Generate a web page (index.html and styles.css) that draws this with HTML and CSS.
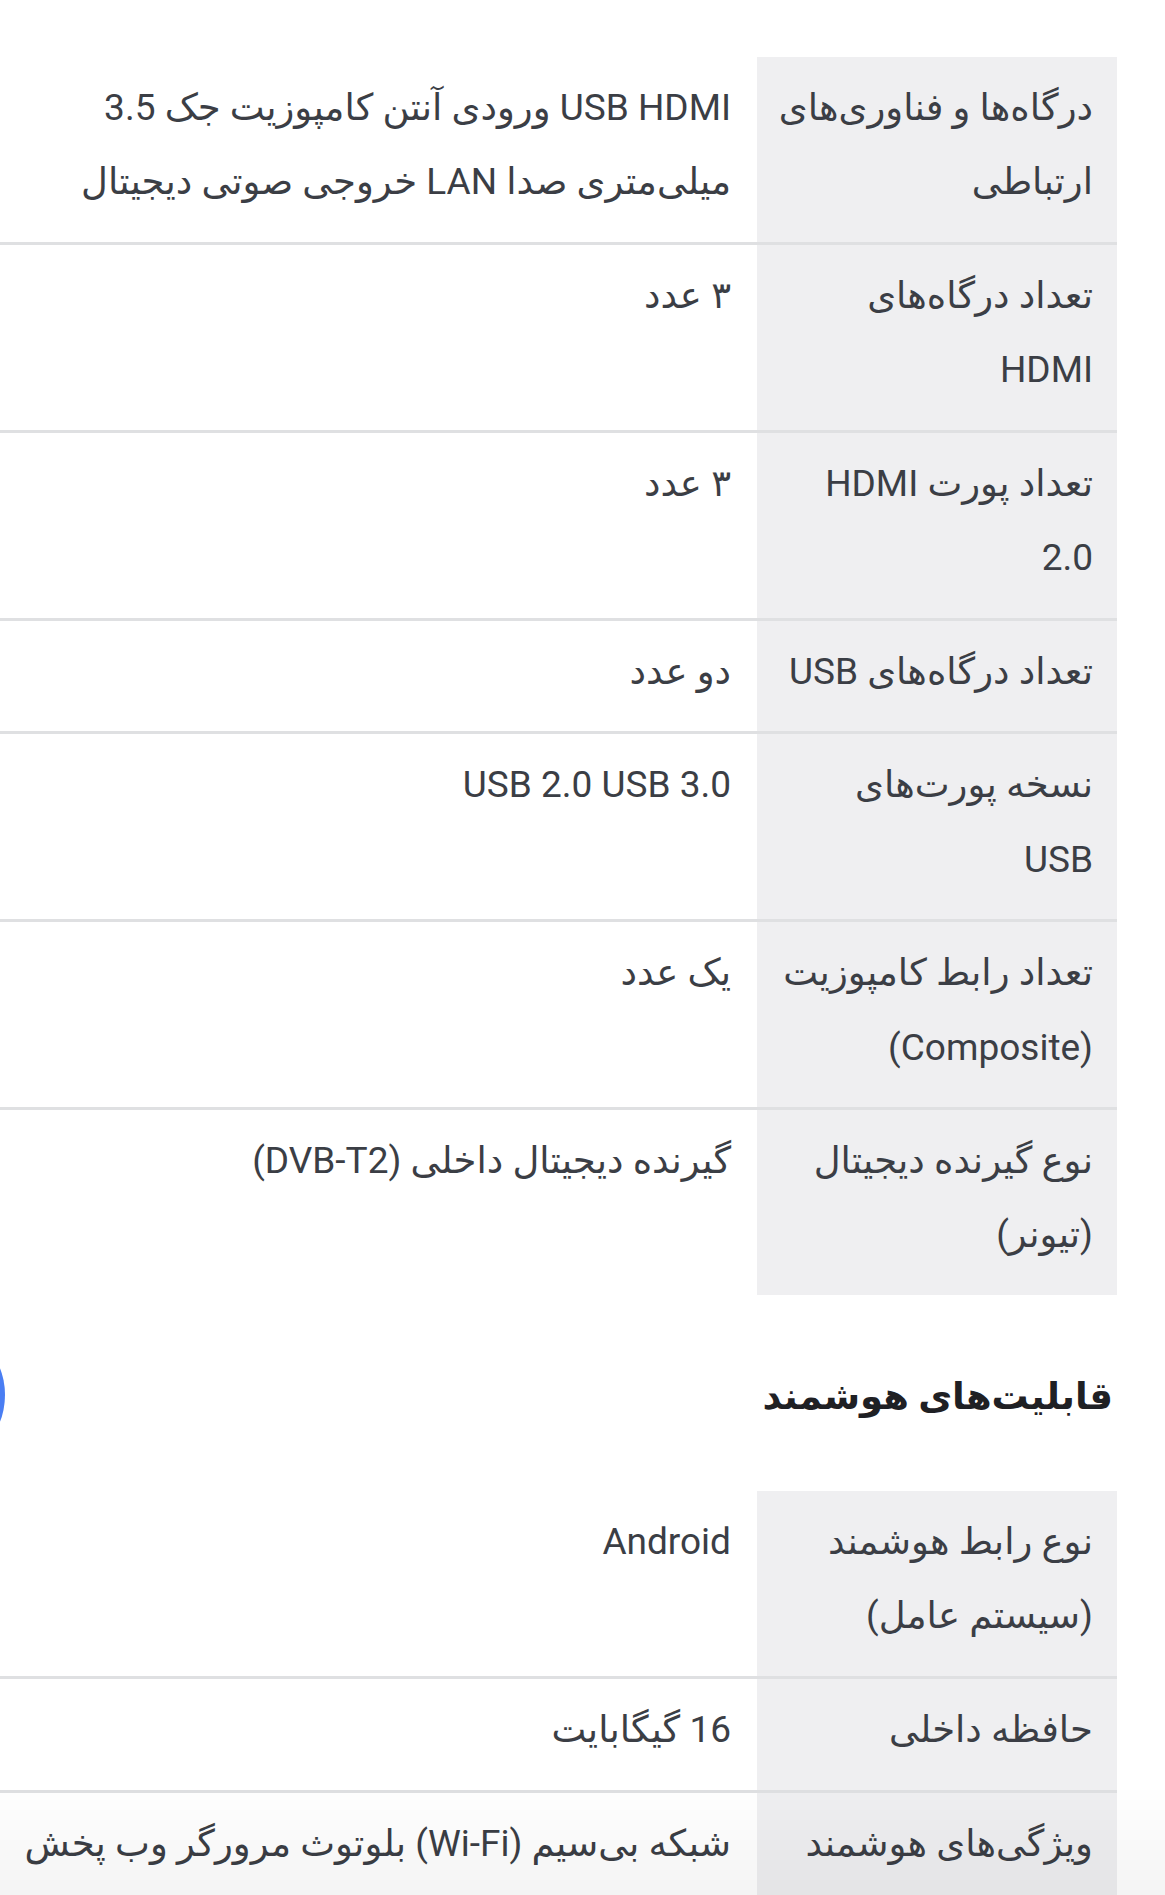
FILE: index.html
```html
<!DOCTYPE html>
<html lang="fa" dir="rtl">
<head>
<meta charset="utf-8">
<title>مشخصات</title>
<link rel="stylesheet" href="styles.css">
</head>
<body>
<div class="page">
  <table class="specs">
    <colgroup><col class="col-label"><col class="col-value"></colgroup>
    <tbody>
      <tr><th>درگاه‌ها و فناوری‌های ارتباطی</th><td>USB HDMI ورودی آنتن کامپوزیت جک 3.5 میلی‌متری صدا LAN خروجی صوتی دیجیتال</td></tr>
      <tr><th>تعداد درگاه‌های HDMI</th><td>۳ عدد</td></tr>
      <tr><th>تعداد پورت HDMI 2.0</th><td>۳ عدد</td></tr>
      <tr><th>تعداد درگاه‌های USB</th><td>دو عدد</td></tr>
      <tr><th>نسخه پورت‌های USB</th><td>USB 2.0 USB 3.0</td></tr>
      <tr><th>تعداد رابط کامپوزیت (Composite)</th><td>یک عدد</td></tr>
      <tr><th>نوع گیرنده دیجیتال (تیونر)</th><td>گیرنده دیجیتال داخلی (DVB-T2)</td></tr>
    </tbody>
  </table>

  <h2 class="section-title">قابلیت‌های هوشمند</h2>

  <table class="specs">
    <colgroup><col class="col-label"><col class="col-value"></colgroup>
    <tbody>
      <tr><th>نوع رابط هوشمند (سیستم عامل)</th><td>Android</td></tr>
      <tr><th>حافظه داخلی</th><td>16 گیگابایت</td></tr>
      <tr><th>ویژگی‌های هوشمند</th><td>شبکه بی‌سیم (Wi-Fi) بلوتوث مرورگر وب پخش</td></tr>
    </tbody>
  </table>
</div>
<div class="fab" aria-hidden="true"></div>
<div class="bottom-fade" aria-hidden="true"></div>
</body>
</html>
```
FILE: styles.css
```css
html, body {
  margin: 0;
  padding: 0;
  background: #ffffff;
}

body {
  font-family: Roboto, "DejaVu Sans", sans-serif;
  color: #3b3e45;
  direction: rtl;
}

.page {
  padding: 57px 48px 0 0;
}

.specs {
  width: 100%;
  table-layout: fixed;
  border-collapse: collapse;
  border-spacing: 0;
}

.col-label { width: 360px; }

.specs th,
.specs td {
  font-size: 37px;
  line-height: 74.2px;
  font-weight: 400;
  text-align: right;
  vertical-align: top;
}

.specs th {
  padding: 14px 24px 22.5px 21px;
  background: #efeff1;
  color: #3b3e45;
}

.specs td {
  padding: 14px 26px 22.5px 16px;
  color: #3b3e45;
}

.specs tr + tr th,
.specs tr + tr td {
  border-top: 3px solid #dfe0e2;
}

.section-title {
  margin: 0;
  padding: 72px 4px 64px 0;
  font-size: 37px;
  line-height: 60px;
  font-weight: 700;
  color: #1f2024;
}

.fab {
  position: fixed;
  left: -145px;
  top: 1320px;
  width: 150px;
  height: 150px;
  border-radius: 50%;
  background: #4a7ef3;
}

.bottom-fade {
  position: fixed;
  left: 0;
  right: 0;
  bottom: 0;
  height: 110px;
  background: linear-gradient(to bottom, rgba(0, 0, 0, 0), rgba(0, 0, 0, 0.045));
  pointer-events: none;
}
```
